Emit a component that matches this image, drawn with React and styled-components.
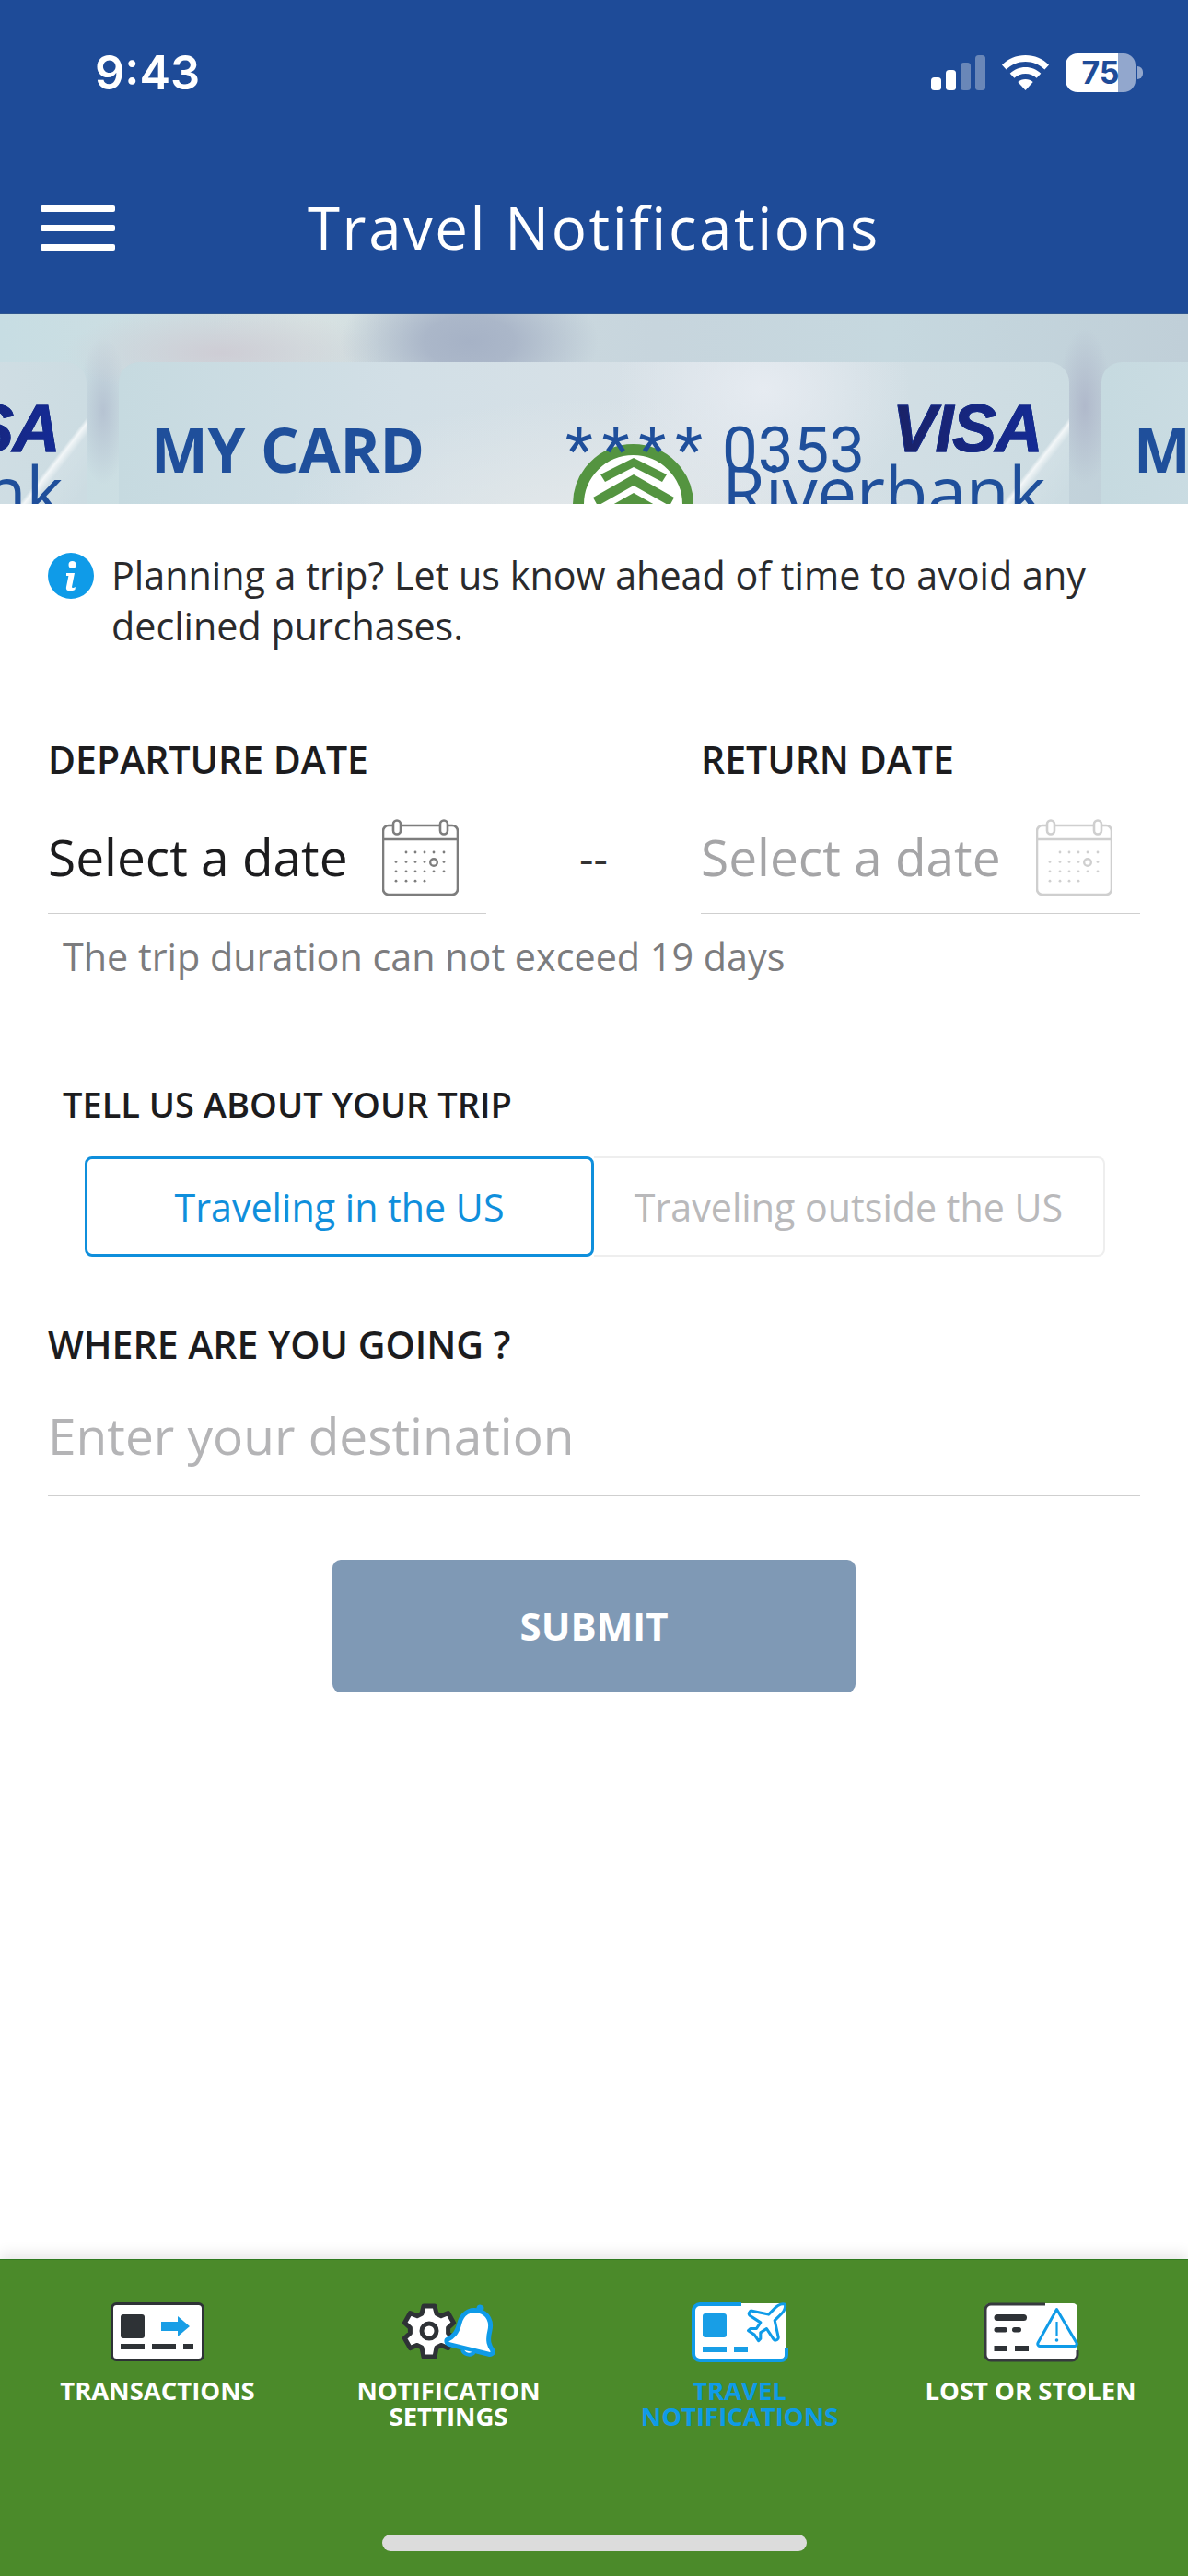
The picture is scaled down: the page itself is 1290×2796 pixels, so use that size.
import React from "react";
import styled, { createGlobalStyle } from "styled-components";

const Global = createGlobalStyle`
  html, body { margin: 0; padding: 0; background: #fff; }
  * { box-sizing: border-box; }
`;
const SANS = `"Open Sans", "Noto Sans", sans-serif`;

const Page = styled.div`
  width: 1290px; height: 2796px; display: flex; flex-direction: column;
  font-family: ${SANS}; color: #1c1c1e; overflow: hidden; background: #fff;
`;
const Header = styled.header`
  height: 341px; flex: none; background: #1e4b98; color: #fff; border-bottom: 1px solid #2f5690;
`;
const StatusBar = styled.div`
  height: 58px; margin-top: 50px; padding: 0 57px 0 103px;
  display: flex; align-items: center; justify-content: space-between;
`;
const Clock = styled.span`
  font: 600 50.5px/58px Inter, sans-serif; letter-spacing: 0;
`;
const StatusIcons = styled.div`
  display: flex; align-items: center; gap: 17px;
`;
const Battery = styled.div`
  position: relative; width: 76px; height: 42px; border-radius: 13px;
  background: linear-gradient(to right, #fff 75%, #92a7cd 75%);
  color: #1e4b98; font: 700 34px/42px Inter, sans-serif; text-align: center;
  &::after {
    content: ""; position: absolute; left: 78px; top: 14px; width: 6px; height: 14px;
    border-radius: 0 7px 7px 0; background: #92a7cd;
  }
`;
const TitleRow = styled.div`
  height: 100px; margin-top: 89px; padding: 0 44px;
  display: grid; grid-template-columns: 1fr auto 1fr; align-items: center;
`;
const Burger = styled.div`
  width: 81px; display: flex; flex-direction: column; gap: 14px;
  span { display: block; height: 7px; border-radius: 2px; background: #fff; }
`;
const Title = styled.h1`
  margin: 0; font: 500 63.5px/100px ${SANS}; letter-spacing: 2.6px; white-space: nowrap;
`;

const Banner = styled.section`
  height: 206px; flex: none; overflow: hidden; padding-top: 52px;
  display: flex; justify-content: center; gap: 35px;
  background:
    radial-gradient(ellipse 140px 80px at 510px 30px, #a6b2c6 0%, #abb7c9 35%, rgba(169,181,200,0) 100%),
    radial-gradient(ellipse 170px 50px at 240px 42px, rgba(206,204,212,.95) 0%, rgba(205,205,212,0) 100%),
    radial-gradient(ellipse 110px 60px at 340px 12px, rgba(216,226,226,.9) 0%, rgba(216,226,226,0) 100%),
    radial-gradient(ellipse 30px 85px at 1178px 100px, #b0b9cb 0%, rgba(179,188,205,0) 100%),
    radial-gradient(ellipse 28px 80px at 112px 105px, #b6c3d2 0%, rgba(186,198,212,0) 100%),
    linear-gradient(90deg, #c7dde3 0%, #d3e0e2 25%, #c7d5dd 55%, #c6d8df 75%, #c0cfd8 100%);
`;
const CardFace = styled.div`
  position: relative; flex: none; width: 1032px; height: 300px; border-radius: 22px 22px 0 0;
  overflow: hidden; color: #1f4f9b;
  background:
    linear-gradient(128deg, rgba(255,255,255,0) 85.2%, rgba(255,255,255,.75) 85.6%, rgba(255,255,255,.1) 86.4%, rgba(255,255,255,0) 90%),
    radial-gradient(ellipse 160px 130px at 700px 30px, #e6ebf1 0%, rgba(230,235,241,0) 100%),
    radial-gradient(ellipse 340px 130px at 520px 170px, #e3e8ea 0%, rgba(227,232,234,0) 100%),
    linear-gradient(90deg, #c6dae0 0%, #d2dfe6 30%, #d8e1e7 60%, #ccdce2 100%);
`;
const CardName = styled.span`
  position: absolute; left: 35px; top: 55px;
  font: 700 65.500px/80px ${SANS}; letter-spacing: -.2px; white-space: nowrap;
`;
const CardNumber = styled.span`
  position: absolute; left: 485px; top: 56px; z-index: 2; display: flex; gap: 11px;
  font: 400 69px/80px Roboto, sans-serif; white-space: nowrap;
`;
const Stars = styled.span`
  letter-spacing: 10px;
`;
const VisaMark = styled.span`
  position: absolute; left: 840px; top: 40px;
  font: italic 700 72px/64px "Liberation Sans", sans-serif; letter-spacing: -1.5px;
  -webkit-text-stroke: 1px #142b88;
  background: linear-gradient(90deg, #1a2266, #142b98);
  -webkit-background-clip: text; background-clip: text; color: transparent; padding-right: 6px;
`;
const BankName = styled.span`
  position: absolute; left: 655px; top: 94px;
  font: 500 76.500px/90px ${SANS}; letter-spacing: -.5px; white-space: nowrap;
`;
const BankLogo = styled.svg`
  position: absolute; left: 493px; top: 89px;
`;

const Main = styled.main`
  flex: 1; display: flex; flex-direction: column; padding: 50px 52px 0; min-height: 0;
`;
const Notice = styled.div`
  display: flex; align-items: flex-start; gap: 19px;
  font: 400 41.250px/55px ${SANS}; color: #2a2a2c;
  p { margin: 0; width: 1120px; }
  svg { flex: none; margin-top: 3px; }
`;
const Dates = styled.div`
  margin-top: 92px; display: grid; grid-template-columns: 476px 233px 477px; align-items: start;
`;
const Label = styled.div`
  font: 600 ${p => p.$small ? 38 : 41}px/50px ${SANS}; color: #1c1c1e; white-space: nowrap;
  margin-left: ${p => p.$indent || 0}px; margin-top: ${p => p.$top || 0}px;
`;
const DateInput = styled.div`
  height: 143px; padding-top: 20px; display: flex; align-items: center; justify-content: space-between;
  border-bottom: 1px solid #cfcfcf; padding-right: ${p => p.$pad}px;
  font: 400 55px/70px ${SANS}; color: ${p => p.$muted ? "#a5a5a7" : "#1c1c1e"};
`;
const Dash = styled.div`
  margin-top: 50px; height: 143px; padding-top: 20px; display: flex; align-items: center; justify-content: center;
  font: 400 48px/60px ${SANS}; color: #333;
`;
const Hint = styled.div`
  margin: 21px 0 0 16px; font: 400 41.300px/50px ${SANS}; color: #7c7c7e;
`;
const Segments = styled.div`
  margin: 32px 38px 0 40px; height: 109px; display: grid; grid-template-columns: 553px 555px;
`;
const Segment = styled.div`
  display: flex; align-items: center; justify-content: center; white-space: nowrap;
  font: 400 41.200px/50px ${SANS}; border-radius: ${p => p.$active ? "8px" : "0 8px 8px 0"};
  color: ${p => p.$active ? "#0f8fdc" : "#b9b9bb"};
  border: ${p => p.$active ? "3px solid #0f8fdc" : "2px solid #eeeeee"};
  border-left-width: ${p => p.$active ? "3px" : "0"};
`;
const Destination = styled.div`
  padding: 44px 0 35px; border-bottom: 1px solid #cfcfcf;
  font: 400 55px/60px ${SANS}; color: #b4b4b6;
`;
const Submit = styled.button`
  display: block; width: 568px; height: 144px; margin: 69px auto 0; border: 0; border-radius: 9px;
  background: #7f99b5; color: #fff; font: 700 42px/50px ${SANS};
`;

const TabBar = styled.nav`
  position: relative; height: 344px; flex: none; background: #4b8a2a; padding: 46px 13px 0;
  display: grid; grid-template-columns: repeat(4, 316px); align-items: start;
  box-shadow: 0 -6px 14px rgba(0,0,0,.09);
  border-top: 1px solid #2f7a20;
`;
const Tab = styled.div`
  display: flex; flex-direction: column; align-items: center; text-align: center;
  font: 700 27.500px/28px ${SANS}; color: ${p => p.$active ? "#0f9be8" : "#fff"};
  svg { display: block; margin-bottom: 18px; overflow: visible; }
`;
const HomeBar = styled.div`
  position: absolute; left: 415px; bottom: 27px; width: 461px; height: 18px; border-radius: 9px; background: #dcdcdc;
`;

const Calendar = ({ faded }) => {
  const c = faded ? "#cfcfcf" : "#7d7d7d";
  const rows = [
    [26, 36, 46, 56, 67],
    [15, 26, 36, 46, 67],
    [15, 26, 36, 46, 56, 67],
    [15, 26, 36, 46],
  ];
  return (
    <svg width="83" height="83" viewBox="0 0 83 83" fill="none" stroke={c} strokeWidth="2.6">
      <path d="M11 7H7a6 6 0 0 0-6 6v63a6 6 0 0 0 6 6h69a6 6 0 0 0 6-6V13a6 6 0 0 0-6-6h-4M21 7h41M1 22h81" />
      <rect x="12" y="1.5" width="8" height="15" rx="4" />
      <rect x="63" y="1.5" width="8" height="15" rx="4" />
      <circle cx="56" cy="47" r="3.8" strokeWidth="2.4" />
      {rows.map((r, i) => r.map(x => (
        <circle key={`${i}-${x}`} cx={x} cy={36 + i * 10.4} r="1.4" fill={c} stroke="none" />
      )))}
    </svg>
  );
};

const TransactionsIcon = () => (
  <svg width="102" height="64" viewBox="0 0 102 64">
    <rect x="1.5" y="1.5" width="99" height="61" rx="5" fill="#fff" stroke="#2e3236" strokeWidth="3" />
    <rect x="11" y="13" width="26" height="26" rx="3" fill="#2e3236" />
    <path d="M55 21h18v-6l13 11-13 11v-6H55z" fill="#189ee6" />
    <path d="M11 45h26v6H11zM45 45h26v6H45zM79 45h11v6H79z" fill="#2e3236" />
  </svg>
);
const SettingsIcon = () => (
  <svg width="102" height="64" viewBox="0 0 102 64">
    <path
      d="M24 3h12l2 8 5 2.4 7.6-3 6 10.4-6 5.4v5.6l6 5.4-6 10.4-7.6-3L38 47l-2 10H24l-2-10-5-2.4-7.6 3-6-10.4 6-5.4v-5.6l-6-5.4 6-10.4 7.6 3L22 11z"
      transform="translate(0 1) scale(1 1.02)"
      fill="#fff" stroke="#2e3236" strokeWidth="5" strokeLinejoin="round" />
    <circle cx="30" cy="31" r="8" fill="#fff" stroke="#2e3236" strokeWidth="5" />
    <g transform="rotate(14 76 32)">
      <circle cx="79" cy="5" r="4" fill="#0f9be8" />
      <path d="M79 7c-11 0-17 8-17 18 0 11-3 16-9 21 0 3 2 4 4 4h44c2 0 4-1 4-4-6-5-9-10-9-21 0-10-6-18-17-18z"
        transform="translate(-1 1)" fill="#fff" stroke="#0f9be8" strokeWidth="5" strokeLinejoin="round" />
      <path d="M71 53a7 6 0 0 0 13 0" fill="#fff" stroke="#0f9be8" strokeWidth="4" />
    </g>
  </svg>
);
const TravelIcon = () => (
  <svg width="104" height="64" viewBox="0 0 104 64">
    <rect x="2" y="1" width="100" height="61" rx="6" fill="#fff" />
    <path d="M54 2H9a7 7 0 0 0-7 7v47a7 7 0 0 0 7 7h88a6 6 0 0 0 6-6v-7" fill="none" stroke="#0f9be8" strokeWidth="4" />
    <rect x="12" y="12" width="26" height="26" rx="3" fill="#189ee6" />
    <path d="M12 48h26v6H12zM46 48h15v6H46z" fill="#189ee6" />
    <path
      d="M17.8 19.2 16 11l3.5-3.5C21 6 21.5 4 21 3c-1-.5-3 0-4.5 1.5L13 8 4.8 6.2c-.5-.1-.9.1-1.1.5l-.3.5c-.2.5-.1 1 .3 1.3L9 12l-2 3H4l-1 1 3 2 2 3 1-1v-3l3-2 3.5 5.3c.3.4.8.5 1.3.3l.5-.2c.4-.3.6-.7.5-1.2z"
      transform="translate(55 -4.5) scale(2.2)" fill="#fff" stroke="#0f9be8" strokeWidth="1.4" strokeLinejoin="round" />
  </svg>
);
const LostIcon = () => (
  <svg width="102" height="64" viewBox="0 0 102 64">
    <rect x="2" y="1" width="100" height="62" rx="5" fill="#fff" />
    <path d="M67 2H8a6 6 0 0 0-6 6v49a6 6 0 0 0 6 6h88a6 6 0 0 0 6-6v-5" fill="none" stroke="#363a3e" strokeWidth="3" />
    <rect x="11.5" y="13" width="35.5" height="7" rx="3.5" fill="#2e3236" />
    <rect x="11.5" y="27" width="14.5" height="5.5" rx="2.7" fill="#2e3236" />
    <rect x="31" y="27" width="10" height="5.5" rx="2.7" fill="#2e3236" />
    <path d="M11.5 47H26v6H11.5zM34 47h15v6H34z" fill="#2e3236" />
    <path d="M79.5 7.5 59 44a2.5 2.5 0 0 0 2 3.5h38a2.5 2.5 0 0 0 2-3.5z" fill="#fff" stroke="#0f9be8" strokeWidth="3" strokeLinejoin="round" />
    <path d="M79.5 21v15" stroke="#0f9be8" strokeWidth="2.2" />
    <circle cx="79.5" cy="41" r="1.8" fill="#0f9be8" />
  </svg>
);

const Card = () => (
  <CardFace>
    <CardName>MY CARD</CardName>
    <BankLogo width="131" height="131" viewBox="0 0 131 131">
      <circle cx="65.5" cy="65.5" r="59.500" fill="#fff" stroke="#549440" strokeWidth="12" />
      <path d="M66 15 102 33 97 41 66 25 35 41 30 33z M66 33 110 58 105 67 66 45 27 67 22 58z M66 53 112 79 107 88 66 65 25 88 20 79z" fill="#549440" />
    </BankLogo>
    <CardNumber><Stars>****</Stars><span>0353</span></CardNumber>
    <VisaMark>VISA</VisaMark>
    <BankName>Riverbank</BankName>
  </CardFace>
);

export default function App() {
  return (
    <Page>
      <Global />
      <Header>
        <StatusBar>
          <Clock>9:43</Clock>
          <StatusIcons>
            <svg width="59" height="38" viewBox="0 0 59 38">
              <rect x="0" y="24" width="11" height="14" rx="3.5" fill="#fff" />
              <rect x="16" y="16" width="11" height="22" rx="3.5" fill="#fff" />
              <rect x="32" y="8" width="11" height="30" rx="3.5" fill="#6a87b8" />
              <rect x="48" y="0" width="11" height="38" rx="3.5" fill="#6a87b8" />
            </svg>
            <svg width="53" height="38" viewBox="0 0 53 38">
              <path d="M26.5 0C16.5 0 7.6 4 1 10.5l4.6 5C11 10.3 18.4 7 26.5 7s15.500 3.300 20.900 8.500l4.600-5C45.400 4 36.500 0 26.500 0z" fill="#fff" />
              <path d="M26.5 13c-6.500 0-12.400 2.600-16.800 6.700l4.700 5c3.100-3 7.400-4.800 12.100-4.800s9 1.800 12.100 4.800l4.700-5C38.900 15.600 33 13 26.500 13z" fill="#fff" />
              <path d="M26.500 26c-3.200 0-6 1.200-8.200 3.100L26.500 38l8.200-8.900C32.500 27.200 29.700 26 26.500 26z" fill="#fff" />
            </svg>
            <Battery>75</Battery>
          </StatusIcons>
        </StatusBar>
        <TitleRow>
          <Burger><span /><span /><span /></Burger>
          <Title>Travel Notifications</Title>
        </TitleRow>
      </Header>

      <Banner>
        <Card />
        <Card />
        <Card />
      </Banner>

      <Main>
        <Notice>
          <svg width="50" height="50" viewBox="0 0 50 50">
            <circle cx="25" cy="25" r="25" fill="#0f9be8" />
            <circle cx="26.500" cy="13" r="4" fill="#fff" />
            <path d="M20 22h9l-3 15c0 1 1 1.500 4 0l-.6 3c-5 2.500-10.400 2-9.400-3l2.400-12H20z" fill="#fff" />
          </svg>
          <p>Planning a trip? Let us know ahead of time to avoid any declined purchases.</p>
        </Notice>

        <Dates>
          <div>
            <Label>DEPARTURE DATE</Label>
            <DateInput $pad={30}>Select a date<Calendar /></DateInput>
          </div>
          <Dash>--</Dash>
          <div>
            <Label>RETURN DATE</Label>
            <DateInput $muted $pad={30}>Select a date<Calendar faded /></DateInput>
          </div>
        </Dates>
        <Hint>The trip duration can not exceed 19 days</Hint>

        <Label $small $indent={16} $top={110}>TELL US ABOUT YOUR TRIP</Label>
        <Segments>
          <Segment $active>Traveling in the US</Segment>
          <Segment>Traveling outside the US</Segment>
        </Segments>

        <Label $top={70}>WHERE ARE YOU GOING ?</Label>
        <Destination>Enter your destination</Destination>
        <Submit>SUBMIT</Submit>
      </Main>

      <TabBar>
        <Tab><TransactionsIcon />TRANSACTIONS</Tab>
        <Tab><SettingsIcon />NOTIFICATION<br />SETTINGS</Tab>
        <Tab $active><TravelIcon />TRAVEL<br />NOTIFICATIONS</Tab>
        <Tab><LostIcon />LOST OR STOLEN</Tab>
        <HomeBar />
      </TabBar>
    </Page>
  );
}
